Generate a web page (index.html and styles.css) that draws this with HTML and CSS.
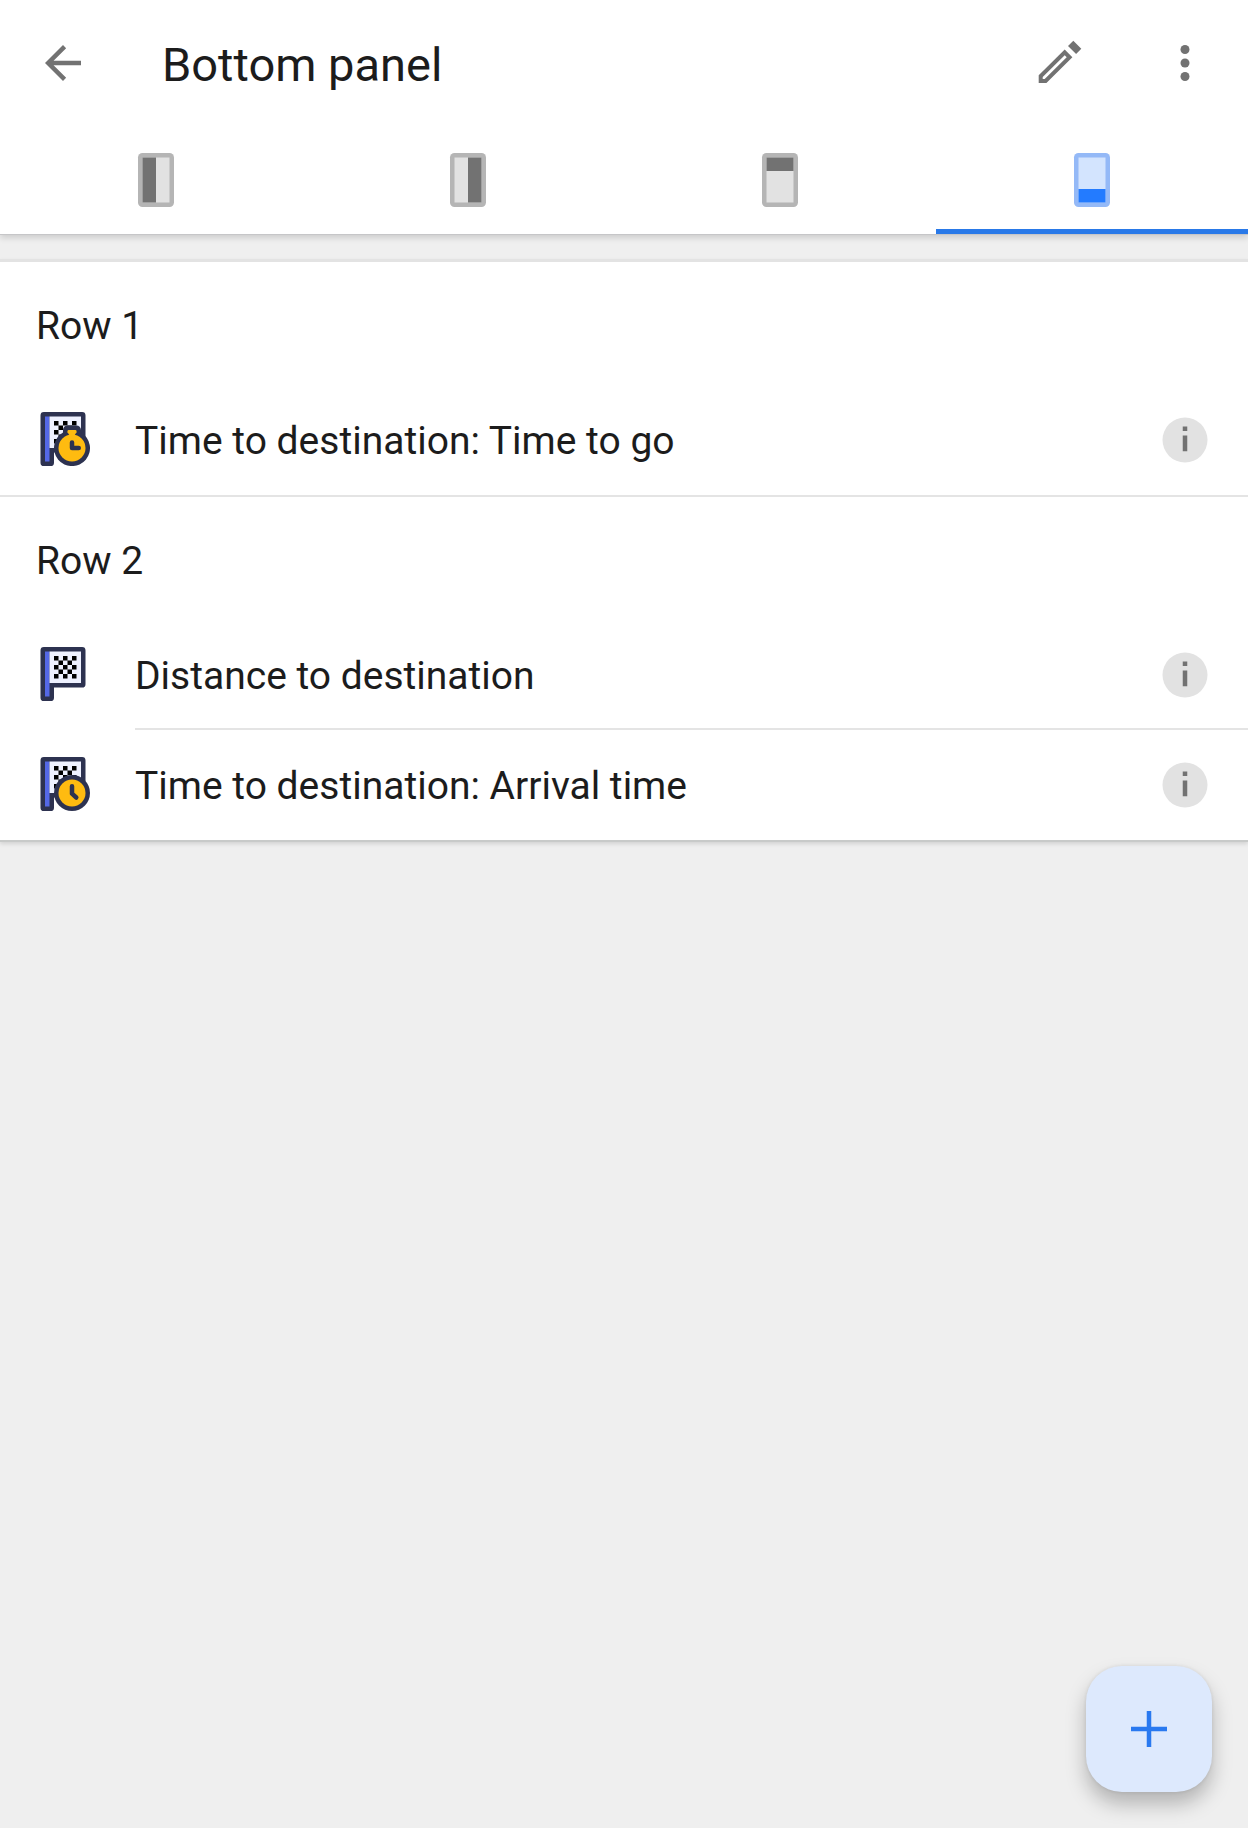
FILE: index.html
```
<!DOCTYPE html>
<html lang="en">
<head>
    <meta charset="UTF-8">
    <meta name="viewport" content="width=device-width, initial-scale=1.0">
    <title>Bottom panel</title>
    <link rel="stylesheet" href="styles.css">
</head>
<body>
    <!-- shared shapes -->
    <svg class="defs" aria-hidden="true">
        <symbol id="flag" viewBox="0 0 24 24">
            <path fill="#2d3250" d="M3.500 0h17A1.500 1.500 0 0 1 22 1.500v15a1.500 1.500 0 0 1-1.500 1.500H8v4.500A1.500 1.500 0 0 1 6.500 24h-3A1.500 1.500 0 0 1 2 22.500v-21A1.500 1.500 0 0 1 3.500 0z"/>
            <path fill="#5468e7" d="M4 2h2v20H4z"/>
            <path fill="#eef1ff" d="M6 2h14v14H6z"/>
            <path fill="#000" d="M8 4h2v2H8zM12 4h2v2h-2zM16 4h2v2h-2zM10 6h2v2h-2zM14 6h2v2h-2zM8 8h2v2H8zM12 8h2v2h-2zM16 8h2v2h-2zM10 10h2v2h-2zM14 10h2v2h-2zM8 12h2v2H8zM12 12h2v2h-2zM16 12h2v2h-2z"/>
        </symbol>
        <symbol id="info" viewBox="0 0 24 24">
            <circle cx="12" cy="12" r="10" fill="#e2e2e2"/>
            <path fill="#727272" d="M11 6h2v2h-2zM11 10h2v7h-2z"/>
        </symbol>
    </svg>

    <header class="app-bar">
        <div class="toolbar">
            <button type="button" class="icon-button" aria-label="Back">
                <svg class="icon" viewBox="0 0 24 24"><path fill="#727272" d="M20 11H7.800l5.600-5.600L12 4l-8 8 8 8 1.400-1.400L7.800 13H20z"/></svg>
            </button>
            <h1 class="title">Bottom panel</h1>
            <button type="button" class="icon-button" aria-label="Edit">
                <svg class="icon" viewBox="-1 0 54 54"><path fill="#727272" fill-rule="evenodd" d="M5.700 47v-7.700L31.700 13.500l7.700 7.700L13.400 47zM9.700 41v2h2l22-21.800-2-2zM40.300 4.700l8 8-5.200 5.300-8.100-8.100z"/></svg>
            </button>
            <button type="button" class="icon-button" aria-label="More options">
                <svg class="icon" viewBox="0 0 24 24"><g fill="#727272"><circle cx="12" cy="6" r="2"/><circle cx="12" cy="12" r="2"/><circle cx="12" cy="18" r="2"/></g></svg>
            </button>
        </div>
        <nav class="tabs">
            <button type="button" class="tab" aria-label="Left panel">
                <svg class="icon" viewBox="0 0 24 24"><rect class="frame" x="4" width="16" height="24" rx="2"/><path class="screen" d="M6 2h12v20H6z"/><path class="part" d="M6 2h6v20H6z"/></svg>
            </button>
            <button type="button" class="tab" aria-label="Right panel">
                <svg class="icon" viewBox="0 0 24 24"><rect class="frame" x="4" width="16" height="24" rx="2"/><path class="screen" d="M6 2h12v20H6z"/><path class="part" d="M12 2h6v20h-6z"/></svg>
            </button>
            <button type="button" class="tab" aria-label="Top panel">
                <svg class="icon" viewBox="0 0 24 24"><rect class="frame" x="4" width="16" height="24" rx="2"/><path class="screen" d="M6 2h12v20H6z"/><path class="part" d="M6 2h12v6H6z"/></svg>
            </button>
            <button type="button" class="tab active" aria-label="Bottom panel">
                <svg class="icon" viewBox="0 0 24 24"><rect class="frame" x="4" width="16" height="24" rx="2"/><path class="screen" d="M6 2h12v20H6z"/><path class="part" d="M6 16h12v6H6z"/></svg>
            </button>
        </nav>
    </header>

    <main class="card">
        <section class="row">
            <h2 class="row-title">Row 1</h2>
            <ul class="widgets">
                <li class="widget">
                    <svg class="icon" viewBox="0 0 24 24">
                        <use href="#flag"/>
                        <path fill="#2d3250" d="M14 6h4a2 2 0 0 1 2 2v1.100A8 8 0 1 1 12 9.100V8a2 2 0 0 1 2-2z"/>
                        <circle cx="16" cy="16" r="6" fill="#ffbb10"/>
                        <path fill="#ffbb10" d="M14.500 8h3a.5.5 0 0 1 .5.500v.5L17 10.500h-2L14 9v-.5a.5.5 0 0 1 .5-.5z"/>
                        <path class="hands" d="M16 13.500V16h3"/>
                    </svg>
                    <div class="widget-body">
                        <span class="widget-name">Time to destination: Time to go</span>
                        <button type="button" class="icon-button" aria-label="Info"><svg class="icon"><use href="#info"/></svg></button>
                    </div>
                </li>
            </ul>
        </section>
        <section class="row">
            <h2 class="row-title">Row 2</h2>
            <ul class="widgets">
                <li class="widget">
                    <svg class="icon"><use href="#flag"/></svg>
                    <div class="widget-body">
                        <span class="widget-name">Distance to destination</span>
                        <button type="button" class="icon-button" aria-label="Info"><svg class="icon"><use href="#info"/></svg></button>
                    </div>
                </li>
                <li class="widget">
                    <svg class="icon" viewBox="0 0 24 24">
                        <use href="#flag"/>
                        <circle cx="16" cy="16" r="8" fill="#2d3250"/>
                        <circle cx="16" cy="16" r="6" fill="#ffbb10"/>
                        <path class="hands" d="M16 13v3.300l1.900 1.700"/>
                    </svg>
                    <div class="widget-body">
                        <span class="widget-name">Time to destination: Arrival time</span>
                        <button type="button" class="icon-button" aria-label="Info"><svg class="icon"><use href="#info"/></svg></button>
                    </div>
                </li>
            </ul>
        </section>
    </main>

    <button type="button" class="fab" aria-label="Add widget">
        <svg class="icon" viewBox="0 0 24 24"><path fill="#2979f0" d="M11 4h2v7h7v2h-7v7h-2v-7H4v-2h7z"/></svg>
    </button>
</body>
</html>
```
FILE: styles.css
```
* {
    box-sizing: border-box;
}
body {
    margin: 0;
    min-height: 100vh;
    background-color: #efefef;
    color: #1c1c1c;
    font-family: Roboto, sans-serif;
}
h1, h2, ul {
    margin: 0;
    padding: 0;
    font-weight: 400;
    list-style: none;
}
button {
    padding: 0;
    border: none;
    background: none;
    cursor: pointer;
}
.defs {
    position: absolute;
    width: 0;
    height: 0;
}
.icon {
    display: block;
    flex: none;
    width: 54px;
    height: 54px;
}

/* app bar */
.app-bar {
    background-color: #fff;
    box-shadow: 0 1px #c6c6c8, 0 4px 6px rgba(0, 0, 0, 0.14);
}
.toolbar {
    display: flex;
    align-items: center;
    gap: 72px;
    height: 126px;
    padding: 0 36px;
}
.title {
    flex: 1;
    padding-top: 4px;
    font-size: 47px;
    line-height: 54px;
}
.tabs {
    display: flex;
    height: 108px;
}
.tab {
    display: flex;
    flex: 1;
    align-items: center;
    justify-content: center;
}
.tab.active {
    box-shadow: inset 0 -5px #2979e8;
}
.frame {
    fill: #b5b5b5;
}
.screen {
    fill: #e2e2e2;
}
.part {
    fill: #727272;
}
.active .frame {
    fill: #94b9f7;
}
.active .screen {
    fill: #d3e4fe;
}
.active .part {
    fill: #237bff;
}

/* widget list */
.card {
    margin-top: 25px;
    padding-bottom: 2px;
    border-top: 3px solid #e3e3e3;
    border-bottom: 2px solid #c8cac9;
    background-color: #fff;
    box-shadow: 0 2px 4px rgba(0, 0, 0, 0.12);
}
.row + .row {
    margin-top: 2px;
    border-top: 2px solid #e4e4e4;
}
.row-title {
    padding: 37px 36px 32px;
    font-size: 39px;
    line-height: 54px;
}
.widget {
    display: flex;
    align-items: center;
    gap: 45px;
    padding-left: 36px;
}
.widget-body {
    display: flex;
    flex: 1;
    align-items: center;
    height: 108px;
    padding-top: 2px;
    padding-right: 36px;
}
.widget + .widget .widget-body {
    border-top: 2px solid #e4e4e4;
    height: 110px;
}
.widget + .widget > .icon {
    margin-top: 2px;
}
.widget-name {
    flex: 1;
    padding-top: 2px;
    font-size: 39px;
    line-height: 54px;
}
.hands {
    fill: none;
    stroke: #2d3250;
    stroke-width: 2;
    stroke-linecap: round;
    stroke-linejoin: round;
}

/* add button */
.fab {
    display: flex;
    position: fixed;
    right: 36px;
    bottom: 36px;
    align-items: center;
    justify-content: center;
    width: 126px;
    height: 126px;
    border-radius: 36px;
    background-color: #dde9fd;
    box-shadow: 0 0 4px rgba(0, 0, 0, 0.1), 0 12px 20px rgba(0, 0, 0, 0.25);
}
```
